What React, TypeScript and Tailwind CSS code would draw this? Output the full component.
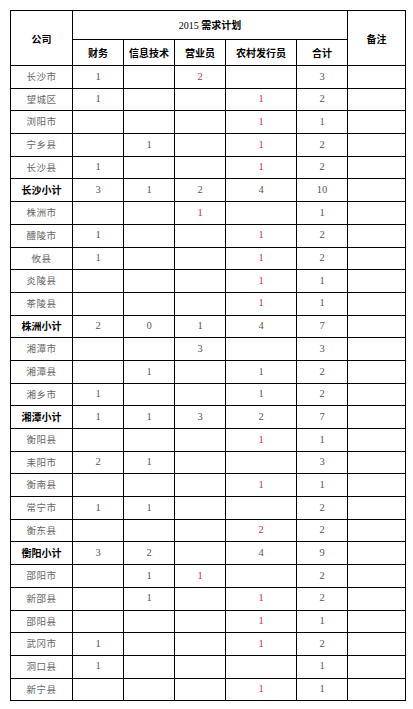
type Cell = string | { v: string; red?: boolean };

type Row = { name: string; sub?: boolean; cells: Cell[] };

const r = (v: string) => ({ v, red: true });

const rows: Row[] = [
  { name: "长沙市", cells: ["1", "", { v: "2", red: true }, "", "3"] },
  { name: "望城区", cells: ["1", "", "", r("1"), "2"] },
  { name: "浏阳市", cells: ["", "", "", r("1"), "1"] },
  { name: "宁乡县", cells: ["", "1", "", r("1"), "2"] },
  { name: "长沙县", cells: ["1", "", "", r("1"), "2"] },
  { name: "长沙小计", sub: true, cells: ["3", "1", "2", "4", "10"] },
  { name: "株洲市", cells: ["", "", r("1"), "", "1"] },
  { name: "醴陵市", cells: ["1", "", "", r("1"), "2"] },
  { name: "攸县", cells: ["1", "", "", r("1"), "2"] },
  { name: "炎陵县", cells: ["", "", "", r("1"), "1"] },
  { name: "茶陵县", cells: ["", "", "", r("1"), "1"] },
  { name: "株洲小计", sub: true, cells: ["2", "0", "1", "4", "7"] },
  { name: "湘潭市", cells: ["", "", "3", "", "3"] },
  { name: "湘潭县", cells: ["", "1", "", "1", "2"] },
  { name: "湘乡市", cells: ["1", "", "", "1", "2"] },
  { name: "湘潭小计", sub: true, cells: ["1", "1", "3", "2", "7"] },
  { name: "衡阳县", cells: ["", "", "", r("1"), "1"] },
  { name: "耒阳市", cells: ["2", "1", "", "", "3"] },
  { name: "衡南县", cells: ["", "", "", r("1"), "1"] },
  { name: "常宁市", cells: ["1", "1", "", "", "2"] },
  { name: "衡东县", cells: ["", "", "", r("2"), "2"] },
  { name: "衡阳小计", sub: true, cells: ["3", "2", "", "4", "9"] },
  { name: "邵阳市", cells: ["", "1", r("1"), "", "2"] },
  { name: "新邵县", cells: ["", "1", "", r("1"), "2"] },
  { name: "邵阳县", cells: ["", "", "", r("1"), "1"] },
  { name: "武冈市", cells: ["1", "", "", r("1"), "2"] },
  { name: "洞口县", cells: ["1", "", "", "", "1"] },
  { name: "新宁县", cells: ["", "", "", r("1"), "1"] },
];

const cjk = "font-['Noto_Sans_CJK_SC',sans-serif]";
const num = "font-['Liberation_Serif','Times_New_Roman',serif]";
const bd = "border-[1.5px] border-black";

export default function App() {
  return (
    <div className="bg-white w-[413px] h-[709px] pt-[10px] pl-[10px]">
      <table className="border-collapse table-fixed w-[395px]">
        <colgroup>
          <col className="w-[62px]" />
          <col className="w-[51px]" />
          <col className="w-[51px]" />
          <col className="w-[51px]" />
          <col className="w-[71px]" />
          <col className="w-[51px]" />
          <col className="w-[58px]" />
        </colgroup>
        <thead>
          <tr className="h-[29px]">
            <th rowSpan={2} className={`${bd} ${cjk} text-[10px] font-bold text-black text-center`}>公司</th>
            <th colSpan={6 - 1} className={`${bd} text-[10px] font-bold text-black text-center`}>
              <span className={num + " font-normal"}>2015 </span>
              <span className={cjk}>需求计划</span>
            </th>
            <th rowSpan={2} className={`${bd} ${cjk} text-[10px] font-bold text-black text-center`}>备注</th>
          </tr>
          <tr className="h-[26px]">
            {["财务", "信息技术", "营业员", "农村发行员", "合计"].map((h) => (
              <th key={h} className={`${bd} ${cjk} text-[10px] font-bold text-black text-center`}>
                {h}
              </th>
            ))}
          </tr>
        </thead>
        <tbody>
          {rows.map((row) => (
            <tr key={row.name} className="h-[22.7px]">
              <td
                className={`${bd} ${cjk} text-center leading-none ${
                  row.sub ? "text-[10px] font-bold text-black" : "text-[9.5px] text-[#666] tracking-[0.5px]"
                }`}
              >
                {row.name}
              </td>
              {row.cells.map((c, i) => {
                const v = typeof c === "string" ? c : c.v;
                const red = typeof c !== "string" && c.red;
                return (
                  <td
                    key={i}
                    className={`${bd} ${num} text-center text-[10.5px] leading-none ${
                      red ? "text-[#c2305a]" : "text-[#555]"
                    }`}
                  >
                    {v}
                  </td>
                );
              })}
              <td className={bd}></td>
            </tr>
          ))}
        </tbody>
      </table>
    </div>
  );
}
